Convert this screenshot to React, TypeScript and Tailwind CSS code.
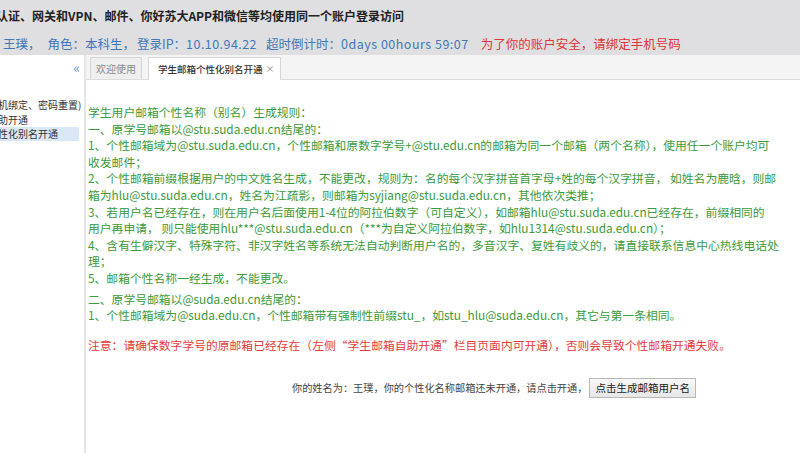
import React from "react";

const F = { fontFamily: '"Noto Sans CJK SC", "Noto Sans", sans-serif' };

const lines1 = [
  "学生用户邮箱个性名称（别名）生成规则：",
  "一、原学号邮箱以@stu.suda.edu.cn结尾的：",
  "1、个性邮箱域为@stu.suda.edu.cn，个性邮箱和原数字学号+@stu.edu.cn的邮箱为同一个邮箱（两个名称），使用任一个账户均可",
  "收发邮件；",
  "2、个性邮箱前缀根据用户的中文姓名生成，不能更改，规则为：名的每个汉字拼音首字母+姓的每个汉字拼音， 如姓名为鹿晗，则邮",
  "箱为hlu@stu.suda.edu.cn，姓名为江疏影，则邮箱为syjiang@stu.suda.edu.cn，其他依次类推；",
  "3、若用户名已经存在，则在用户名后面使用1-4位的阿拉伯数字（可自定义），如邮箱hlu@stu.suda.edu.cn已经存在，前缀相同的",
  "用户再申请， 则只能使用hlu***@stu.suda.edu.cn（***为自定义阿拉伯数字，如hlu1314@stu.suda.edu.cn）；",
  "4、含有生僻汉字、特殊字符、非汉字姓名等系统无法自动判断用户名的，多音汉字、复姓有歧义的，请直接联系信息中心热线电话处",
  "理；",
  "5、邮箱个性名称一经生成，不能更改。",
];

export default function App() {
  return (
    <div
      className="w-[800px] h-[453px] overflow-hidden bg-white flex flex-col font-['Noto_Sans_CJK_SC','Noto_Sans',sans-serif]"
      style={F}
    >
      {/* header */}
      <div className="h-[55px] shrink-0 bg-[#dfdfe1] flex flex-col">
        <div className="h-[31px] flex items-center -ml-[4px] text-[12px] font-bold text-[#222] whitespace-nowrap">
          认证、网关和VPN、邮件、你好苏大APP和微信等均使用同一个账户登录访问
        </div>
        <div className="h-[24px] flex items-start pl-[3px] text-[12.5px] whitespace-nowrap text-[#3f78b8] leading-[20px] pt-[3px]">
          <span>王璞，</span>
          <span className="ml-[7px]">角色：本科生，</span>
          <span className="ml-[2px]">
            登录IP：<span className="tracking-[0.45px]">10.10.94.22</span>
          </span>
          <span className="ml-[9px]">
            超时倒计时：<span className="tracking-[0.5px]">0days 00hours 59:07</span>
          </span>
          <span className="ml-[12px] text-[#e2323a]">为了你的账户安全，请绑定手机号码</span>
        </div>
      </div>

      <div className="flex flex-1 min-h-0">
        {/* sidebar */}
        <div className="w-[86px] shrink-0 border-r-2 border-[#e6e6e6] flex flex-col">
          <div className="h-[25px] flex items-center justify-end pr-[4px] text-[#6b93c9] text-[14px]">
            «
          </div>
          <div className="mt-[17px] text-[10px] text-[#333] leading-[15px] whitespace-nowrap overflow-hidden">
            <div className="h-[15px] -ml-[2px]">机绑定、密码重置)</div>
            <div className="h-[15px] -ml-[2px]">助开通</div>
            <div className="h-[14px] w-[79px] bg-[#d9e7f6] leading-[14px]">
              <span className="-ml-[2px] inline-block">性化别名开通</span>
            </div>
          </div>
        </div>

        {/* main */}
        <div className="flex-1 flex flex-col min-w-0">
          <div className="h-[25px] shrink-0 bg-[#f4f4f4] border-b border-[#dcdcdc] flex items-end pl-[4px] gap-[6px]">
            <div className="h-[22px] px-[5px] flex items-center border border-b-0 border-[#d6d6d6] bg-[#efefef] text-[10px] text-[#8a8a8a]">
              欢迎使用
            </div>
            <div className="h-[23px] -mb-px pl-[9px] pr-[5px] flex items-center border border-b-0 border-[#d6d6d6] bg-white text-[9.5px] text-[#333] font-medium">
              学生邮箱个性化别名开通
              <span className="ml-[3px] text-[#999] text-[9px]">×</span>
            </div>
          </div>

          <div className="pl-[2px] pt-[24px] text-[11.8px] leading-[16.6px] text-[#3b9a3b] whitespace-nowrap">
            {lines1.map((l, i) => (
              <div key={i}>{l}</div>
            ))}
            <div className="mt-[4px]">二、原学号邮箱以@suda.edu.cn结尾的：</div>
            <div>1、个性邮箱域为@suda.edu.cn，个性邮箱带有强制性前缀stu_，如stu_hlu@suda.edu.cn，其它与第一条相同。</div>
            <div className="mt-[13px] text-[#e53c3c]">
              注意：请确保数字学号的原邮箱已经存在（左侧“学生邮箱自助开通”栏目页面内可开通），否则会导致个性邮箱开通失败。
            </div>
            <div className="mt-[25px] ml-[204px] flex items-center text-[10.2px] text-[#444]">
              <span>你的姓名为：王璞，你的个性化名称邮箱还未开通，请点击开通，</span>
              <button className="ml-[2px] h-[20px] px-[5px] border border-[#b9b9b9] bg-[linear-gradient(#f8f8f8,#e6e6e6)] text-[10.5px] text-[#222] leading-[18px]">
                点击生成邮箱用户名
              </button>
            </div>
          </div>
        </div>
      </div>
    </div>
  );
}
